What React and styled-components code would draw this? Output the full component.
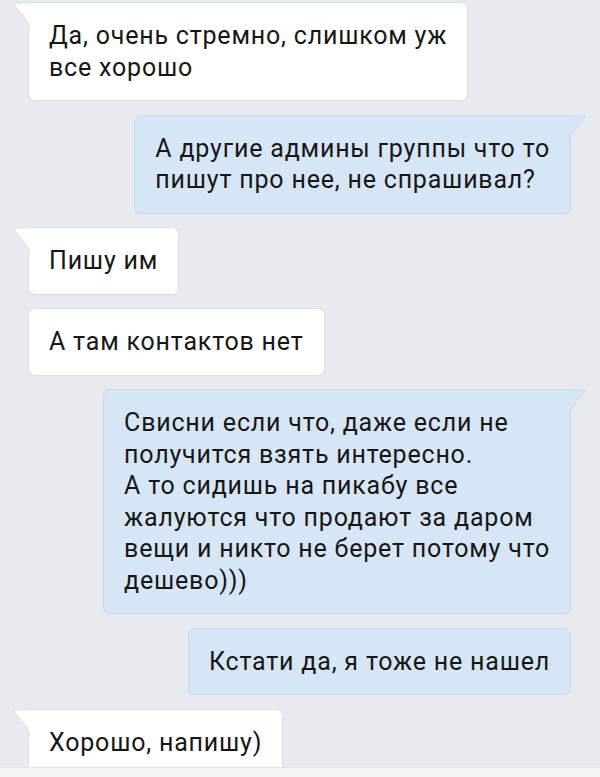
import React from "react";
import styled, { createGlobalStyle } from "styled-components";

const GlobalStyle = createGlobalStyle`
  html, body {
    margin: 0;
    padding: 0;
    background: #e7ebf0;
  }
  * {
    box-sizing: border-box;
  }
`;

const Screen = styled.div`
  width: 600px;
  height: 777px;
  display: flex;
  flex-direction: column;
  overflow: hidden;
  background: #e7ebf0;
  font-family: Roboto, "Noto Sans", sans-serif;
`;

const Feed = styled.div`
  flex: 1;
  min-height: 0;
  overflow: hidden;
  display: flex;
  flex-direction: column;
  gap: 15.5px;
  padding: 3px 30px 0 29px;
`;

const Row = styled.div`
  display: flex;
  justify-content: ${({ $out }) => ($out ? "flex-end" : "flex-start")};
  flex-shrink: 0;
`;

const Bubble = styled.div`
  position: relative;
  width: fit-content;
  padding: 17px 20px;
  border-radius: ${({ $tail, $out }) =>
    $tail ? ($out ? "6px 0 6px 6px" : "0 6px 6px 6px") : "6px"};
  background: ${({ $out }) => ($out ? "#d7e6f7" : "#ffffff")};
  box-shadow: ${({ $out }) =>
    $out ? "0 0 0 1px #c9d9ec, 0 1px 1px #c3d2e3" : "0 0 0 1px #dde1e6, 0 1px 1px #d3d7dc"};
  color: #161616;
  font-size: 25px;
  line-height: 31.5px;
  letter-spacing: 0.8px;
`;

const Line = styled.div`
  white-space: nowrap;
`;

const TailSvg = styled.svg`
  position: absolute;
  top: -1px;
  ${({ $out }) => ($out ? "right: -17px;" : "left: -17px;")}
  width: 18px;
  height: 28px;
  overflow: visible;
`;

const Footer = styled.div`
  height: 10px;
  flex-shrink: 0;
  background: #f3f4f6;
  border-top: 1px solid #e0e3e7;
`;

function Tail({ out }) {
  const fill = out ? "#d7e6f7" : "#ffffff";
  const stroke = out ? "#c9d9ec" : "#dde1e6";
  if (out) {
    return (
      <TailSvg $out viewBox="0 0 18 28">
        <path d="M0 1 L17 1 L3.5 18 Q0.5 22 0.5 28 L0 28 Z" fill={fill} />
        <path d="M1 1 L17 1 L3.5 18 Q0.5 22 0.5 28" fill="none" stroke={stroke} strokeWidth="1" />
      </TailSvg>
    );
  }
  return (
    <TailSvg viewBox="0 0 18 28">
      <path d="M18 1 L1 1 L14.5 18 Q17.5 22 17.5 28 L18 28 Z" fill={fill} />
      <path d="M17 1 L1 1 L14.5 18 Q17.5 22 17.5 28" fill="none" stroke={stroke} strokeWidth="1" />
    </TailSvg>
  );
}

const messages = [
  { out: false, tail: true, lines: ["Да, очень стремно, слишком уж", "все хорошо"] },
  { out: true, tail: true, lines: ["А другие админы группы что то", "пишут про нее, не спрашивал?"] },
  { out: false, tail: true, lines: ["Пишу им"] },
  { out: false, tail: false, lines: ["А там контактов нет"] },
  {
    out: true,
    tail: true,
    lines: [
      "Свисни если что, даже если не",
      "получится взять интересно.",
      "А то сидишь на пикабу все",
      "жалуются что продают за даром",
      "вещи и никто не берет потому что",
      "дешево)))",
    ],
  },
  { out: true, tail: false, lines: ["Кстати да, я тоже не нашел"] },
  { out: false, tail: true, lines: ["Хорошо, напишу)"] },
];

export default function App() {
  return (
    <>
      <GlobalStyle />
      <Screen>
        <Feed>
          {messages.map((m, i) => (
            <Row key={i} $out={m.out}>
              <Bubble $out={m.out} $tail={m.tail}>
                {m.tail && <Tail out={m.out} />}
                {m.lines.map((l, j) => (
                  <Line key={j}>{l}</Line>
                ))}
              </Bubble>
            </Row>
          ))}
        </Feed>
        <Footer />
      </Screen>
    </>
  );
}
